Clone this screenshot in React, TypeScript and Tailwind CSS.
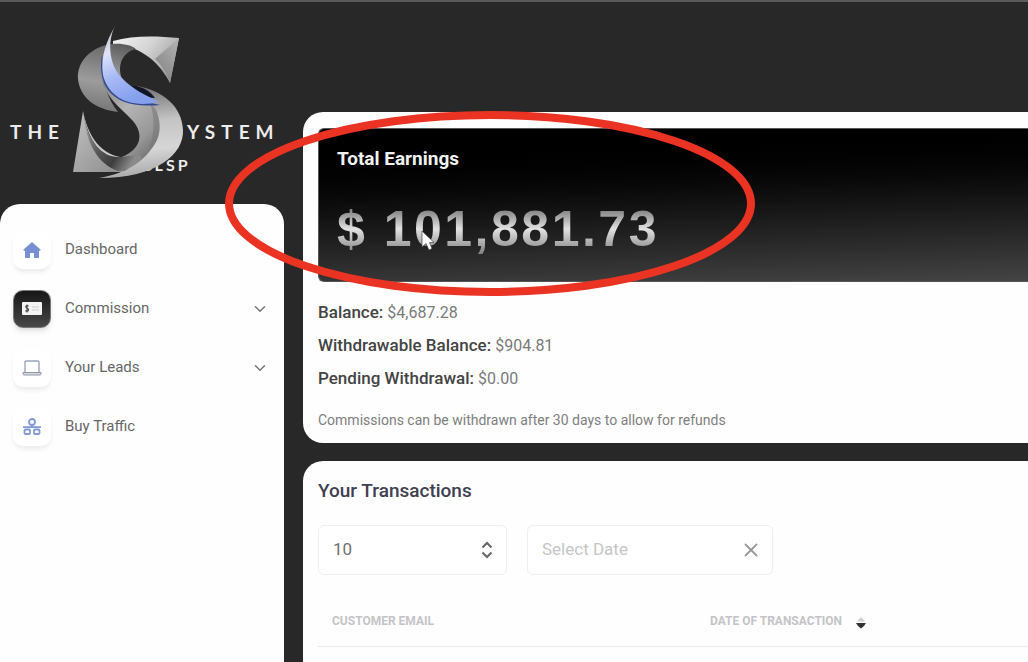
import { ReactNode } from "react";
import { ChevronDown, X } from "lucide-react";

function Logo() {
  return (
    <svg viewBox="0 0 284 204" className="block h-[204px] w-[284px]" role="img" aria-label="The System CLSP">
      <defs>
        <linearGradient id="top" x1="0" y1="0" x2="1" y2="0.6">
          <stop offset="0" stopColor="#f4f4f4" />
          <stop offset="0.5" stopColor="#d4d4d4" />
          <stop offset="1" stopColor="#9a9a9a" />
        </linearGradient>
        <linearGradient id="facet" x1="1" y1="0" x2="0.4" y2="1">
          <stop offset="0" stopColor="#b4b4b4" />
          <stop offset="1" stopColor="#868686" />
        </linearGradient>
        <linearGradient id="bowl" x1="0.6" y1="0" x2="0.5" y2="1">
          <stop offset="0" stopColor="#6a6a6a" />
          <stop offset="0.55" stopColor="#9c9c9c" />
          <stop offset="1" stopColor="#747474" />
        </linearGradient>
        <linearGradient id="inner" x1="0.5" y1="0" x2="0.3" y2="1">
          <stop offset="0" stopColor="#5c5c5c" />
          <stop offset="0.5" stopColor="#8a8a8a" />
          <stop offset="1" stopColor="#b4b4b4" />
        </linearGradient>
        <linearGradient id="band" x1="0" y1="0" x2="0.7" y2="1">
          <stop offset="0" stopColor="#808080" />
          <stop offset="0.4" stopColor="#b4b4b4" />
          <stop offset="0.75" stopColor="#989898" />
          <stop offset="1" stopColor="#6c6c6c" />
        </linearGradient>
        <linearGradient id="sweep" x1="0.4" y1="0" x2="0.5" y2="1">
          <stop offset="0" stopColor="#6e6e6e" />
          <stop offset="0.4" stopColor="#c4c4c4" />
          <stop offset="0.7" stopColor="#d6d6d6" />
          <stop offset="1" stopColor="#a8a8a8" />
        </linearGradient>
        <linearGradient id="foot" x1="0" y1="0" x2="1" y2="1">
          <stop offset="0" stopColor="#c2c2c2" />
          <stop offset="1" stopColor="#8a8a8a" />
        </linearGradient>
        <linearGradient id="tail" x1="0" y1="0" x2="1" y2="0.6">
          <stop offset="0" stopColor="#b8b8b8" />
          <stop offset="0.5" stopColor="#555" />
          <stop offset="0.75" stopColor="#3e3e3e" />
          <stop offset="1" stopColor="#8a8a8a" />
        </linearGradient>
        <linearGradient id="blade" x1="0" y1="0" x2="0.3" y2="1">
          <stop offset="0" stopColor="#b8b8bc" />
          <stop offset="0.35" stopColor="#dfe4fb" />
          <stop offset="0.65" stopColor="#a9bbf5" />
          <stop offset="1" stopColor="#86a0ee" />
        </linearGradient>
      </defs>
      <g fill="#ececec" fontFamily="Lato, 'Open Sans', sans-serif" fontWeight="700">
        <text x="10" y="139" fontSize="19" letterSpacing="6">THE</text>
        <text x="187" y="139" fontSize="19" letterSpacing="6">YSTEM</text>
        <text x="141" y="171" fontSize="16" letterSpacing="3">CLSP</text>
      </g>
      <path d="M113 41 C133 35 157 36 179 38 L170 83 C161 65 143 46 113 44 Z" fill="url(#top)" />
      <path d="M179 38 L155 59 C162 65 167 74 170 83 Z" fill="url(#facet)" />
      <path d="M106 45 C88 50 77 63 78 79 C80 97 94 109 118 112 C108 99 101 82 103 59 Z" fill="url(#bowl)" />
      <path d="M106 45 C119 42 132 45 136 49 C122 52 117 66 122 79 L124 90 C112 84 104 74 103 60 Z" fill="url(#inner)" />
      <path d="M102 80 C106 98 122 109 133 121 C144 134 142 150 119 158 L136 164 C156 160 168 144 167 124 C166 110 156 100 140 99 C124 100 110 92 102 80 Z" fill="url(#band)" />
      <path d="M150 103 C160 113 164 122 162 132 C160 141 155 147 149 149 C152 139 157 125 150 103 Z" fill="#777" opacity="0.55" />
      <path d="M83 111 L73 172 L128 172 C104 165 88 145 83 111 Z" fill="url(#foot)" />
      <path d="M83 111 C84 134 97 154 120 157 L140 155 C145 160 135 170 118 171 C98 164 86 144 83 111 Z" fill="url(#tail)" />
      <path d="M83 111 C87 132 98 153 120 157 C103 158 88 143 83 111 Z" fill="#c8c8c8" />
      <path d="M137 86 C163 91 182 106 183 130 C184 154 157 178 99 178 C128 173 145 161 156 142 C163 130 162 106 137 86 Z" fill="url(#sweep)" />
      <path d="M132 86 C143 86 150 91 155 98 C145 98 136 93 132 86 Z" fill="#101626" />
      <path d="M102 55 C97 84 110 110 160 105 C144 101 114 98 104 73 Z" fill="#34488e" />
      <path d="M115 26 C107 42 109 65 122 78 C133 90 146 95 159 102 C128 109 108 96 103 75 C100 57 107 40 115 26 Z" fill="url(#blade)" />
    </svg>
  );
}

function HomeIcon() {
  return (
    <svg viewBox="0 0 18 16" className="h-4 w-[18px]" aria-hidden="true">
      <path d="M9 0 L18 8 L16 9 V15 Q16 16 15 16 H11 V11 H7 V16 H3 Q2 16 2 15 V9 L0 8 Z" fill="#7790d2" />
    </svg>
  );
}

function MoneyIcon() {
  return (
    <svg viewBox="0 0 20 13" className="h-[13px] w-5" aria-hidden="true">
      <rect width="20" height="13" rx="1" fill="#f3f3f3" />
      <path d="M6.5 4.2 C5 3 3.4 3.8 3.8 5.2 C4.2 6.4 6.5 6.2 6.6 7.7 C6.6 9.3 4.5 9.7 3.3 8.6 M5 2.5 V10.5" fill="none" stroke="#444" strokeWidth="1.1" />
      <path d="M10 5 H17 M10 8 H17" stroke="#cfcfcf" strokeWidth="1.2" />
    </svg>
  );
}

function LaptopIcon() {
  return (
    <svg viewBox="0 0 20 16" className="h-4 w-5" fill="none" aria-hidden="true">
      <path d="M3 12 V2.5 Q3 1 4.500 1 H15.500 Q17 1 17 2.500 V12" stroke="#9ba4b8" strokeWidth="1.4" />
      <path d="M1 12.500 H19 V14 Q19 15 18 15 H2 Q1 15 1 14 Z" fill="#d5d9e0" stroke="#9097a5" strokeWidth="1" />
    </svg>
  );
}

function NetworkIcon() {
  return (
    <svg viewBox="0 0 20 18" className="h-[18px] w-5" fill="none" stroke="#8299d8" strokeWidth="1.8" aria-hidden="true">
      <circle cx="10" cy="4" r="3" />
      <path d="M10 7 V9 M1 9.200 H19" />
      <rect x="2.500" y="11.500" width="5.500" height="4.500" rx="1" />
      <rect x="12" y="11.500" width="5.500" height="4.500" rx="1" />
    </svg>
  );
}

type Item = { label: string; icon: ReactNode; active?: boolean; expandable?: boolean };

const items: Item[] = [
  { label: "Dashboard", icon: <HomeIcon /> },
  { label: "Commission", icon: <MoneyIcon />, active: true, expandable: true },
  { label: "Your Leads", icon: <LaptopIcon />, expandable: true },
  { label: "Buy Traffic", icon: <NetworkIcon /> },
];

function Sidebar() {
  return (
    <aside className="flex w-[284px] shrink-0 flex-col">
      <Logo />
      <nav className="grow rounded-t-[20px] bg-[#fefefe] px-[13px] pt-4">
        <ul>
          {items.map((item) => (
            <li key={item.label}>
              <a href="#" className="flex h-[59px] items-center pr-[2px] text-[#666]">
                <span
                  className={
                    item.active
                      ? "flex size-[38px] items-center justify-center rounded-[10px] border border-[#777] bg-linear-to-b from-[#171717] to-[#484848] shadow-md"
                      : "flex size-[38px] items-center justify-center rounded-[10px] bg-white shadow-[0_4px_5px_-1px_rgba(0,0,0,0.08)]"
                  }
                >
                  {item.icon}
                </span>
                <span className="ml-[14px] grow text-[15px]">{item.label}</span>
                {item.expandable && <ChevronDown size={18} strokeWidth={2} color="#777" />}
              </a>
            </li>
          ))}
        </ul>
      </nav>
    </aside>
  );
}

const balances = [
  { label: "Balance:", value: "$4,687.28" },
  { label: "Withdrawable Balance:", value: "$904.81" },
  { label: "Pending Withdrawal:", value: "$0.00" },
];

function Earnings() {
  return (
    <section className="rounded-l-[20px] bg-[#fefefe] pt-4 pb-[11px] pl-[15px]">
      <div className="h-[154px] rounded-l-md border-y border-l border-[#555] bg-linear-178 from-black from-5% to-[#444] pt-4 pl-[18px]">
        <h2 className="text-[19px] leading-7 font-bold text-[#f2f2f2]">Total Earnings</h2>
        <p className="mt-5 w-fit bg-linear-to-b from-[#777] from-20% via-[#e2e2e2] via-50% to-[#808080] to-85% bg-clip-text font-['Liberation_Sans',sans-serif] text-[50px] leading-[72px] font-bold tracking-wider whitespace-nowrap text-transparent">
          $ 101,881.73
        </p>
      </div>
      <dl className="mt-[14px] text-[17px] leading-[33px]">
        {balances.map((b) => (
          <div key={b.label} className="flex gap-1">
            <dt className="font-medium text-[#444]">{b.label}</dt>
            <dd className="text-[16px] text-[#7a7a7a]">{b.value}</dd>
          </div>
        ))}
      </dl>
      <p className="mt-[13px] text-[14px] leading-6 text-[#808080]">
        Commissions can be withdrawn after 30 days to allow for refunds
      </p>
    </section>
  );
}

function Transactions() {
  return (
    <section className="grow rounded-tl-[20px] bg-[#fefefe] pt-4 pl-[15px]">
      <h2 className="text-[19px] leading-7 font-medium text-[#404052]">Your Transactions</h2>
      <div className="mt-5 flex gap-5">
        <div className="relative w-[189px]">
          <select
            aria-label="Rows per page"
            className="h-[50px] w-full appearance-none rounded-md border border-[#eee] bg-white pl-[14px] text-[17px] text-[#707070]"
          >
            <option>10</option>
            <option>25</option>
            <option>50</option>
          </select>
          <svg viewBox="0 0 12 18" className="pointer-events-none absolute top-4 right-[14px] h-[18px] w-3" fill="none" stroke="#666" strokeWidth="2" aria-hidden="true">
            <path d="M1.500 6.500 L6 2 L10.500 6.500 M1.500 11.500 L6 16 L10.500 11.500" />
          </svg>
        </div>
        <div className="flex h-[50px] w-[246px] items-center rounded-md border border-[#eee] bg-white pr-[10px] pl-[14px]">
          <input
            type="text"
            aria-label="Select Date"
            placeholder="Select Date"
            className="w-full min-w-0 grow bg-transparent text-[17px] text-[#666] outline-none placeholder:text-[#c6c6c6]"
          />
          <button type="button" aria-label="Clear date">
            <X size={22} strokeWidth={2} color="#999" />
          </button>
        </div>
      </div>
      <table className="mt-[22px] w-full table-fixed border-b border-[#ececec] text-left text-[12px] text-[#c4c4c8]">
        <thead>
          <tr className="h-[49px]">
            <th className="w-[378px] pl-[14px] font-bold">CUSTOMER EMAIL</th>
            <th className="pl-[14px] font-bold">
              <button type="button" className="flex items-center gap-[14px] font-bold">
                DATE OF TRANSACTION
                <svg viewBox="0 0 10 12" className="mt-1 h-3 w-[10px]" aria-hidden="true">
                  <path d="M5 0 L9 4.500 H1 Z" fill="#d0d0d0" />
                  <path d="M0 6 H10 Q8 10 5 11.500 Q2 10 0 6 Z" fill="#333" />
                </svg>
              </button>
            </th>
          </tr>
        </thead>
      </table>
    </section>
  );
}

export default function App() {
  return (
    <div className="relative flex min-h-screen gap-[19px] overflow-hidden bg-[#282828] font-[Roboto,sans-serif]">
      <div className="absolute inset-x-0 top-0 h-[2px] bg-[#5a5a5a]" />
      <Sidebar />
      <main className="flex min-w-0 grow flex-col gap-[18px] pt-[112px]">
        <Earnings />
        <Transactions />
      </main>
      <svg viewBox="0 0 530 186" className="pointer-events-none absolute top-[111px] left-[225px] h-[186px] w-[530px]" fill="none" aria-hidden="true">
        <ellipse cx="265" cy="92.500" rx="261" ry="88.500" stroke="#ea3323" strokeWidth="8" />
      </svg>
      <svg viewBox="0 0 14 22" className="pointer-events-none absolute top-[230px] left-[421px] h-[22px] w-[14px]" aria-hidden="true">
        <path d="M1 1 V17 L5 13.500 L8 20 L11 18.500 L8.500 12.500 H13 Z" fill="#fff" stroke="#444" strokeWidth="0.7" />
      </svg>
    </div>
  );
}
